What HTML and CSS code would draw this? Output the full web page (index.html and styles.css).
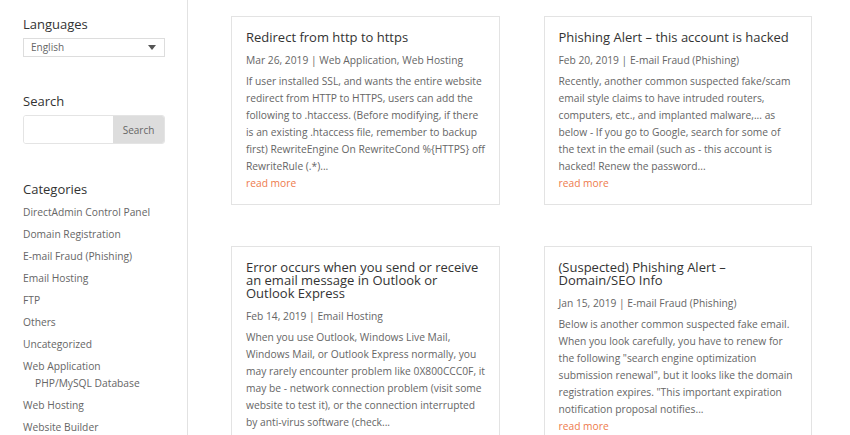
FILE: index.html
```html
<!DOCTYPE html>
<html lang="en">

<head>
    <meta charset="UTF-8">
    <meta name="viewport" content="width=device-width, initial-scale=1.0">
    <title>Blog</title>
    <link rel="stylesheet" href="styles.css">
</head>

<body>
    <div class="page">

        <aside class="sidebar">
            <div class="widget">
                <h4>Languages</h4>
                <div class="select">
                    <span>English</span>
                    <span class="arrow"></span>
                </div>
            </div>

            <div class="widget widget-search">
                <h4>Search</h4>
                <div class="search">
                    <input type="text">
                    <button>Search</button>
                </div>
            </div>

            <div class="widget widget-cats">
                <h4>Categories</h4>
                <ul class="cats">
                    <li><a href="#">DirectAdmin Control Panel</a></li>
                    <li><a href="#">Domain Registration</a></li>
                    <li><a href="#">E-mail Fraud (Phishing)</a></li>
                    <li><a href="#">Email Hosting</a></li>
                    <li><a href="#">FTP</a></li>
                    <li><a href="#">Others</a></li>
                    <li><a href="#">Uncategorized</a></li>
                    <li><a href="#">Web Application</a>
                        <ul class="children">
                            <li><a href="#">PHP/MySQL Database</a></li>
                        </ul>
                    </li>
                    <li><a href="#">Web Hosting</a></li>
                    <li><a href="#">Website Builder</a></li>
                </ul>
            </div>
        </aside>

        <main class="posts">

            <article class="post">
                <h2><a href="#">Redirect from http to https</a></h2>
                <p class="meta">Mar 26, 2019 | <a href="#">Web Application</a>, <a href="#">Web Hosting</a></p>
                <p class="excerpt">If user installed SSL, and wants the entire website redirect from HTTP to HTTPS, users can add the following to .htaccess. (Before modifying, if there is an existing .htaccess file, remember to backup first) RewriteEngine On RewriteCond %{HTTPS} off RewriteRule (.*)...</p>
                <a href="#" class="more">read more</a>
            </article>

            <article class="post">
                <h2><a href="#">Phishing Alert – this account is hacked</a></h2>
                <p class="meta">Feb 20, 2019 | <a href="#">E-mail Fraud (Phishing)</a></p>
                <p class="excerpt">Recently, another common suspected fake/scam email style claims to have intruded routers, computers, etc., and implanted malware,... as below - If you go to Google, search for some of the text in the email (such as - this account is hacked! Renew the password...</p>
                <a href="#" class="more">read more</a>
            </article>

            <article class="post">
                <h2><a href="#">Error occurs when you send or receive an email message in Outlook or Outlook Express</a></h2>
                <p class="meta">Feb 14, 2019 | <a href="#">Email Hosting</a></p>
                <p class="excerpt">When you use Outlook, Windows Live Mail, Windows Mail, or Outlook Express normally, you may rarely encounter problem like 0X800CCC0F, it may be - network connection problem (visit some website to test it), or the connection interrupted by anti-virus software (check...</p>
                <a href="#" class="more">read more</a>
            </article>

            <article class="post">
                <h2><a href="#">(Suspected) Phishing Alert – Domain/SEO Info</a></h2>
                <p class="meta">Jan 15, 2019 | <a href="#">E-mail Fraud (Phishing)</a></p>
                <p class="excerpt">Below is another common suspected fake email. When you look carefully, you have to renew for the following "search engine optimization submission renewal", but it looks like the domain registration expires. "This important expiration notification proposal notifies...</p>
                <a href="#" class="more">read more</a>
            </article>

        </main>

    </div>
</body>

</html>
```

FILE: styles.css
```css
* {
    margin: 0;
    padding: 0;
    box-sizing: border-box;
}

body {
    font-family: "Open Sans", Arial, sans-serif;
    font-size: 10.25px;
    line-height: 17px;
    color: #666;
    background: #fff;
    overflow: hidden;
}

a {
    color: inherit;
    text-decoration: none;
}

ul {
    list-style: none;
}

.page {
    display: flex;
    align-items: flex-start;
    height: 435px;
}

/* sidebar */

.sidebar {
    width: 188px;
    height: 100%;
    padding: 16px 22px 0 23px;
    border-right: 1px solid #e2e2e2;
    flex-shrink: 0;
}

.sidebar h4 {
    font-size: 13px;
    font-weight: 400;
    line-height: 17px;
    color: #333;
    margin-bottom: 5px;
}

.select {
    display: flex;
    align-items: center;
    justify-content: space-between;
    height: 19px;
    padding: 0 8px 0 7px;
    border: 1px solid #ddd;
    color: #666;
    font-size: 10px;
}

.arrow {
    width: 0;
    height: 0;
    border-left: 4px solid transparent;
    border-right: 4px solid transparent;
    border-top: 5px solid #555;
}

.widget-search {
    margin-top: 36px;
}

.search {
    display: flex;
    height: 29px;
    border: 1px solid #e4e4e4;
    border-radius: 3px;
    overflow: hidden;
}

.search input {
    flex: 1;
    min-width: 0;
    border: none;
    outline: none;
    background: #fff;
}

.search button {
    width: 51px;
    border: none;
    background: #ddd;
    color: #666;
    font-family: inherit;
    font-size: 10px;
}

.widget-cats {
    margin-top: 37px;
}

.widget-cats h4 {
    margin-bottom: 6px;
}

.cats li {
    margin-bottom: 5px;
}

.cats .children {
    padding-left: 12px;
}

.cats .children li {
    margin-bottom: 0;
}

/* posts */

.posts {
    flex: 1;
    display: grid;
    grid-template-columns: 1fr 1fr;
    column-gap: 44px;
    row-gap: 41px;
    padding: 16px 38px 0 43px;
}

.post {
    border: 1px solid #e3e3e3;
    padding: 14px 13px 12px 14px;
}

.post h2 {
    font-size: 13px;
    font-weight: 400;
    line-height: 13px;
    color: #333;
    margin-bottom: 8px;
}

.meta {
    margin-bottom: 4px;
}

.more {
    display: block;
    color: #ee7b4c;
}
```
